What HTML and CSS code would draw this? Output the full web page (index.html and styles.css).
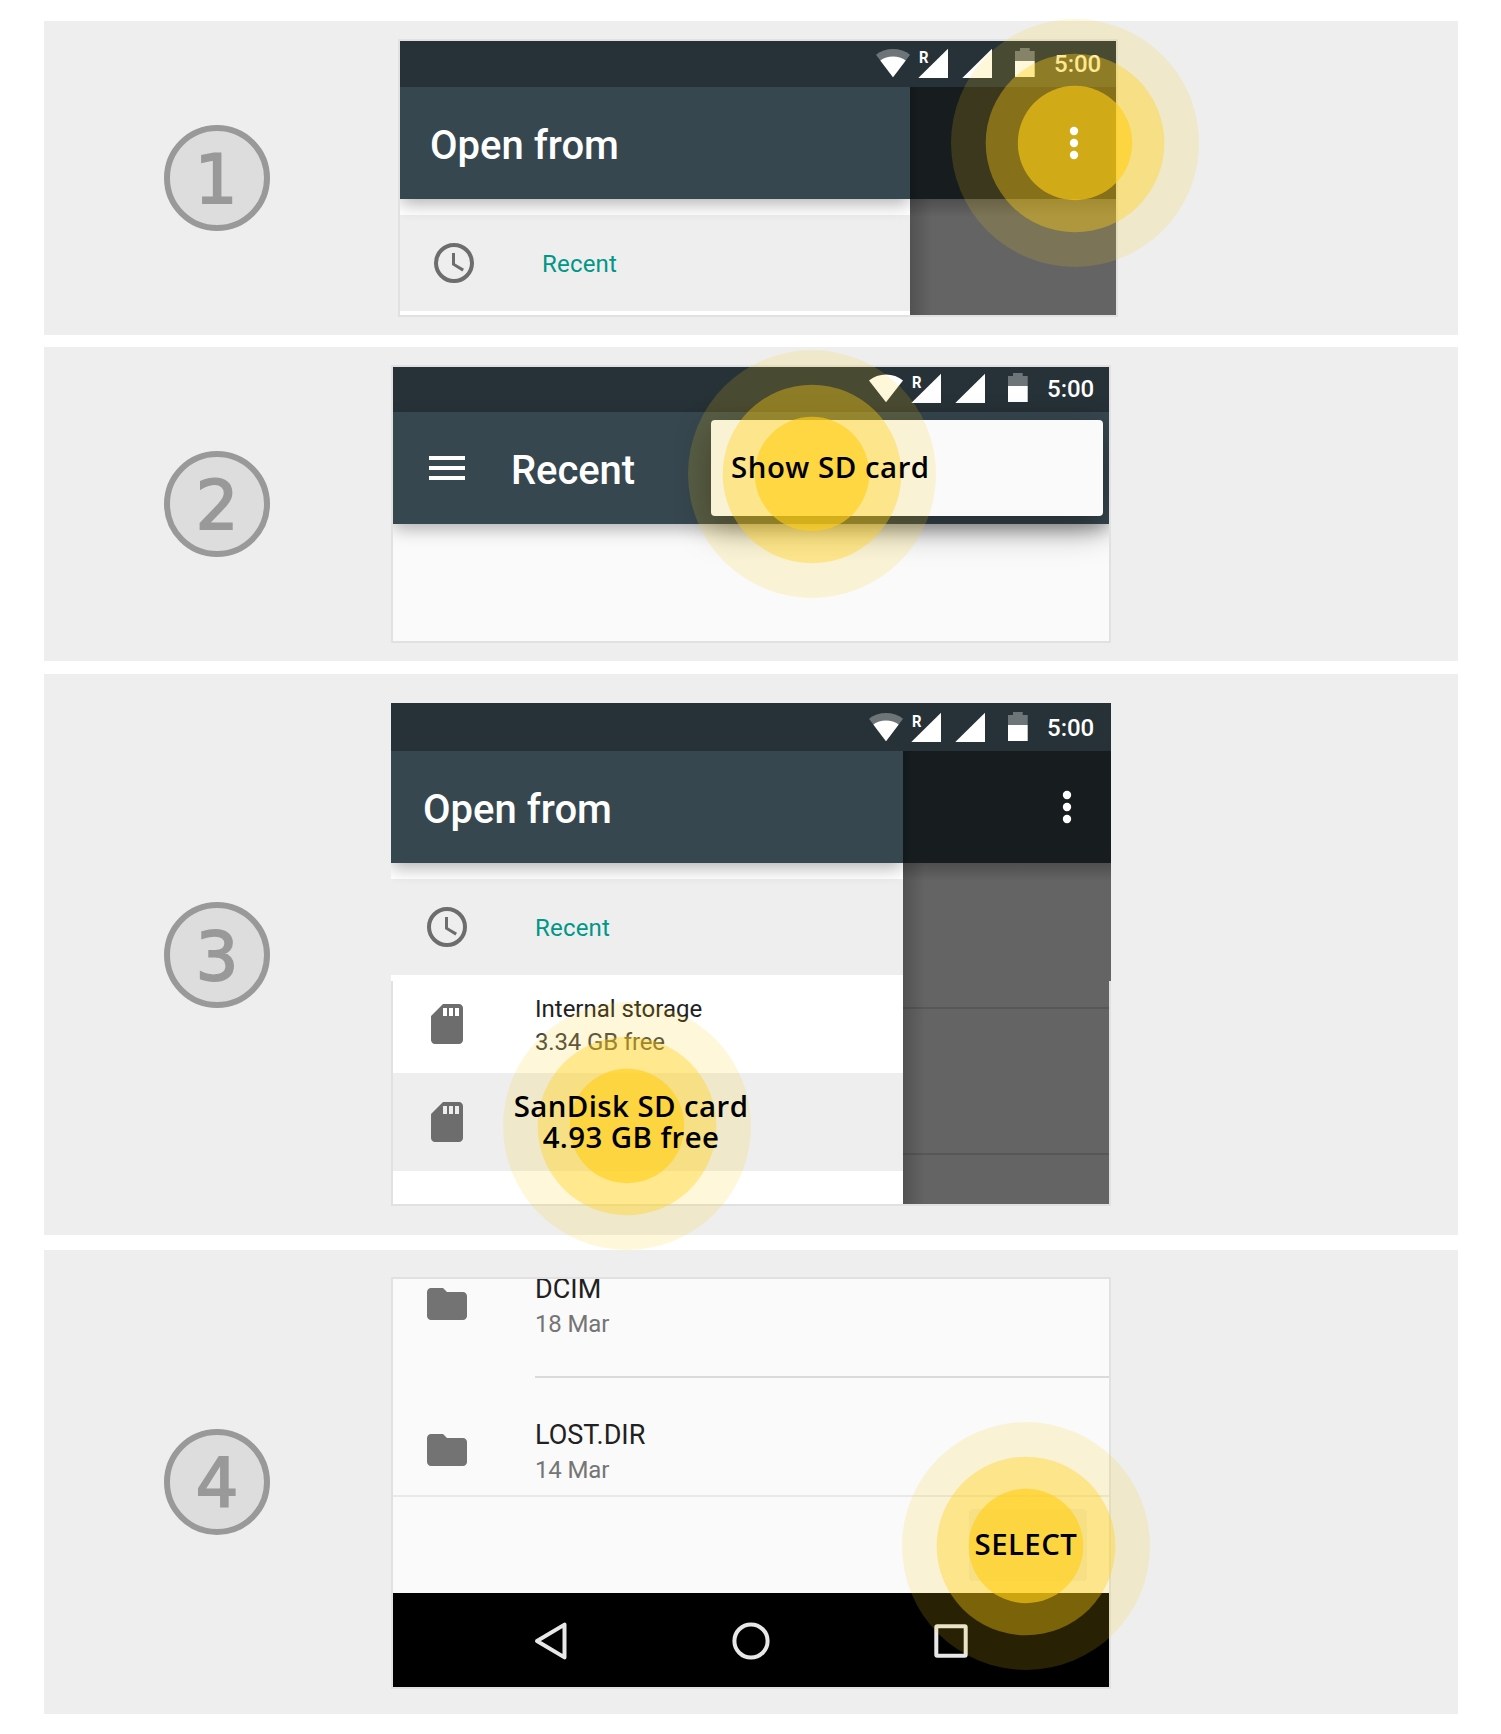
FILE: index.html
```html
<!DOCTYPE html>
<html lang="en">
<head>
<meta charset="utf-8">
<title>Select your SD card</title>
<link rel="stylesheet" href="styles.css">
</head>
<body>
<svg class="defs" width="0" height="0" aria-hidden="true">
  <symbol id="signal" viewBox="0 0 160 30">
    <path d="M72 .7V30H42.300Z"/>
    <path d="M116 .7V30H86.300Z"/>
    <path d="M139 13H158.700V29H139Z"/>
    <path d="M139 13V3H144V0H153.700V3H158.700V13Z" opacity=".33"/>
    <text class="roaming" x="43" y="14.500" textLength="9.500" lengthAdjust="spacingAndGlyphs">R</text>
  </symbol>
  <symbol id="wifi" viewBox="0 0 34 30">
    <path d="M0 6.800C9-.9 25-.9 34 6.800L17 29.300Z" opacity=".33"/>
    <path d="M4.300 12.400C11 7.300 23 7.300 29.700 12.400L17 29.300Z"/>
  </symbol>
  <symbol id="wifi-full" viewBox="0 0 34 30">
    <path d="M0 7.500C9-.6 25-.6 34 7.500L17 29.300Z"/>
  </symbol>
  <symbol id="clock" viewBox="0 0 24 24">
    <circle cx="12" cy="12" r="9" fill="none" stroke="currentColor" stroke-width="2"/>
    <path d="M11 7h1.500v5.300l4.500 2.600-.8 1.300L11 13z"/>
  </symbol>
  <symbol id="sd" viewBox="0 0 24 24">
    <path d="M18 2h-8L4.020 8 4 20c0 1.100.9 2 2 2h12c1.100 0 2-.9 2-2V4c0-1.100-.9-2-2-2zm-6 6h-2V4h2v4zm3 0h-2V4h2v4zm3 0h-2V4h2v4z"/>
  </symbol>
  <symbol id="folder" viewBox="0 0 24 24">
    <path d="M10 4H4c-1.100 0-1.990.9-1.990 2L2 18c0 1.100.9 2 2 2h16c1.100 0 2-.9 2-2V8c0-1.100-.9-2-2-2h-8l-2-2z"/>
  </symbol>
  <symbol id="dots" viewBox="0 0 10 34">
    <circle cx="5" cy="5" r="4.200"/><circle cx="5" cy="17" r="4.200"/><circle cx="5" cy="29" r="4.200"/>
  </symbol>
  <symbol id="tap" viewBox="0 0 248 248">
    <circle cx="124" cy="124" r="124" opacity=".16"/>
    <circle cx="124" cy="124" r="89.300" opacity=".381"/>
    <circle cx="124" cy="124" r="57.200" opacity=".615"/>
  </symbol>
</svg>

<main class="steps">
  <section class="step step-1">
    <div class="badge">1</div>
    <div class="phone framed">
      <header class="status">
        <svg class="wifi"><use href="#wifi"/></svg><svg class="signal"><use href="#signal"/></svg><span class="time">5:00</span>
      </header>
      <div class="split">
        <div class="drawer">
          <div class="appbar">Open from</div>
          <div class="row recent"><svg class="icon"><use href="#clock"/></svg><span>Recent</span></div>
        </div>
        <div class="scrim">
          <div class="scrim-bar"><svg class="dots"><use href="#dots"/></svg></div>
          <div class="scrim-body"></div>
        </div>
      </div>
    </div>
    <svg class="tap"><use href="#tap"/></svg>
  </section>

  <section class="step step-2">
    <div class="badge">2</div>
    <div class="phone framed">
      <header class="status">
        <svg class="wifi"><use href="#wifi-full"/></svg><svg class="signal"><use href="#signal"/></svg><span class="time">5:00</span>
      </header>
      <div class="appbar">
        <div class="burger"><i></i><i></i><i></i></div>
        <span class="title">Recent</span>
        <div class="popup"><span class="label">Show SD card</span></div>
      </div>
    </div>
    <svg class="tap"><use href="#tap"/></svg>
  </section>

  <section class="step step-3">
    <div class="badge">3</div>
    <div class="phone">
      <div class="upper">
        <header class="status">
          <svg class="wifi"><use href="#wifi"/></svg><svg class="signal"><use href="#signal"/></svg><span class="time">5:00</span>
        </header>
        <div class="split">
          <div class="drawer">
            <div class="appbar">Open from</div>
            <div class="row recent"><svg class="icon"><use href="#clock"/></svg><span>Recent</span></div>
          </div>
          <div class="scrim">
            <div class="scrim-bar"><svg class="dots"><use href="#dots"/></svg></div>
            <div class="scrim-body"></div>
          </div>
        </div>
      </div>
      <div class="lower">
        <div class="storage">
          <div class="row internal"><svg class="icon"><use href="#sd"/></svg><div class="lines"><div>Internal storage</div><div class="free">3.34 GB free</div></div></div>
          <div class="row card"><svg class="icon"><use href="#sd"/></svg><div class="label"><div class="name">SanDisk SD card</div><div class="size">4.93 GB free</div></div></div>
        </div>
        <div class="scrim-list"><hr><hr></div>
      </div>
    </div>
    <svg class="tap"><use href="#tap"/></svg>
  </section>

  <section class="step step-4">
    <div class="badge">4</div>
    <div class="phone framed">
      <div class="files">
        <div class="file"><svg class="icon"><use href="#folder"/></svg><div class="info"><div class="name">DCIM</div><div class="date">18 Mar</div></div></div>
        <div class="file"><svg class="icon"><use href="#folder"/></svg><div class="info"><div class="name">LOST.DIR</div><div class="date">14 Mar</div></div></div>
      </div>
      <div class="actions"><div class="button"><span class="label">SELECT</span></div></div>
      <nav class="nav">
        <svg viewBox="0 0 48 48"><path d="M37.500 7.600V40.400L10 24Z"/></svg>
        <svg viewBox="0 0 48 48"><circle cx="24" cy="24" r="16.600"/></svg>
        <svg viewBox="0 0 48 48"><rect x="9.300" y="9.300" width="29.400" height="29.400" rx="1"/></svg>
      </nav>
    </div>
    <svg class="tap"><use href="#tap"/></svg>
  </section>
</main>
</body>
</html>
```
FILE: styles.css
```css
* { box-sizing: border-box; }
body { margin: 0; background: #fff; font-family: Roboto, sans-serif; }
svg { display: block; flex: none; fill: currentColor; }
.defs { position: absolute; }

.steps { padding: 21px 43px 20px 44px; }
.step { position: relative; display: flex; align-items: center; height: 314px; background: #eee; }
.step-2 { margin-top: 12px; }
.step-3 { margin-top: 13px; height: 561px; }
.step-4 { margin-top: 15px; height: 464px; }

.badge {
  flex: none; width: 106px; height: 106px; margin-left: 120px;
  border: 6px solid #999; border-radius: 50%; background: #ddd; color: #999;
  font: 67px/99px "DejaVu Sans", sans-serif; text-align: center;
  -webkit-text-stroke: 2px #999;
}
.step-1 .badge { padding-right: 2px; }
.step-3 .badge { margin-top: 1px; }

.phone { flex: none; width: 720px; margin-left: 121px; }
.framed { border: 2px solid #e1e1e1; }
.step-1 .phone { margin-left: 128px; height: 278px; }
.step-2 .phone { height: 278px; overflow: clip; background: #fafafa; }
.step-4 .phone { height: 412px; margin-top: 2px; background: #fafafa; }

.status { display: flex; justify-content: flex-end; height: 46px; padding: 7px 14px 0 0; background: #273238; color: #fff; }
.step-2 .status { height: 45px; padding-top: 6px; }
.step-3 .status { height: 48px; padding: 9px 16px 0 0; }
.wifi { width: 34px; height: 30px; }
.signal { width: 160px; height: 30px; margin-left: -34px; }
.roaming { font: 700 17px Roboto, sans-serif; }
.time { width: 48px; margin-left: 18px; font-size: 24px; font-weight: 500; line-height: 32px; }

.split { display: grid; grid-template-columns: 510px 206px; height: 228px; }
.step-3 .split { grid-template-columns: 512px 208px; height: 230px; }
.drawer { overflow: hidden; background: #fff; }
.appbar {
  position: relative; display: flex; align-items: center; height: 112px; padding: 5px 0 0 30px;
  background: #37474f; color: #fff; font-size: 40px; font-weight: 500;
  box-shadow: 0 6px 16px -1px rgba(0, 0, 0, .3);
}
.step-3 .appbar { padding-left: 32px; }
.row { display: flex; align-items: center; padding-left: 30px; font-size: 24px; }
.icon { width: 48px; height: 48px; color: #6d6d6d; }
.recent { height: 96px; margin-top: 16px; background: #eee; color: #009688; }
.recent span { margin: 2px 0 0 64px; letter-spacing: .2px; }
.step-3 .recent { padding-left: 32px; }

.scrim-bar { display: flex; align-items: center; height: 112px; padding-left: 159px; background: linear-gradient(90deg, #13191b, #171c1f 10px); color: #fff; }
.dots { position: relative; z-index: 3; width: 10px; height: 34px; }
.scrim-body { height: 116px; background: linear-gradient(90deg, rgba(0, 0, 0, .18), transparent 22px), linear-gradient(rgba(0, 0, 0, .22), transparent 18px), #646464; }
.step-3 .scrim-body { height: 118px; }

.tap { position: absolute; z-index: 2; width: 248px; height: 248px; color: #ffcf15; pointer-events: none; }
.step-1 .tap { left: 907px; top: -2px; }
.step-2 .tap { left: 644px; top: 3px; }
.step-3 .tap { left: 459px; top: 328px; }
.step-4 .tap { left: 858px; top: 172px; }

.label {
  position: relative; z-index: 3; color: #000;
  font: 600 28px/30.500px "Open Sans", sans-serif; letter-spacing: .4px; white-space: nowrap;
  transform: scaleX(1.05);
}

.burger { display: grid; gap: 6px; width: 36px; margin: -5px 0 0 6px; }
.burger i { height: 4px; background: #fff; }
.title { margin-left: 46px; letter-spacing: -.1px; }
.popup {
  display: flex; align-items: center; width: 392px; height: 96px; margin: -5px 6px 0 auto; padding: 0 0 2px 20px;
  border-radius: 4px; background: #fafafa; box-shadow: 0 12px 34px rgba(0, 0, 0, .4);
}
.popup .label { letter-spacing: .5px; transform-origin: left; }

.lower { display: grid; grid-template-columns: 510px 206px; height: 225px; border: 2px solid #e1e1e1; border-top: 0; background: #fff; }
.internal { height: 98px; margin-top: -6px; color: #212121; }
.lines { margin-left: 64px; padding-top: 4px; line-height: 33px; }
.lines .free { color: #424242; letter-spacing: -.15px; }
.card { height: 98px; background: #eee; }
.card .label { width: 240px; margin-left: 40px; padding-bottom: 1px; text-align: center; }
.scrim-list { padding-top: 26px; background: linear-gradient(90deg, rgba(0, 0, 0, .18), transparent 22px), #646464; }
.scrim-list hr { height: 2px; margin: 0 0 144px; border: 0; background: rgba(0, 0, 0, .12); }
.scrim-list hr:last-child { margin: 0; }

.files { height: 218px; overflow: hidden; border-bottom: 2px solid #e9e9e9; }
.file { display: flex; height: 146px; padding-left: 30px; }
.file:first-child { margin-top: -47px; }
.file .icon { margin-top: 48px; color: #737373; }
.info { flex: 1; margin-left: 64px; padding-top: 42px; border-bottom: 2px solid #dadada; }
.info .name { color: #212121; font-size: 27px; line-height: 30px; }
.info .date { margin-top: 6px; color: #757575; font-size: 24px; line-height: 28px; letter-spacing: -.15px; }
.actions { display: flex; align-items: center; justify-content: flex-end; height: 96px; padding-right: 22px; }
.button { display: flex; align-items: center; justify-content: center; width: 118px; height: 72px; padding: 0 5px 2px 0; border-radius: 4px; background: rgba(0, 0, 0, .05); }
.nav { display: flex; justify-content: center; gap: 152px; height: 94px; padding-top: 24px; background: #000; }
.nav svg { width: 48px; height: 48px; fill: none; stroke: #e8e8e8; stroke-width: 4; stroke-linejoin: round; }
```
